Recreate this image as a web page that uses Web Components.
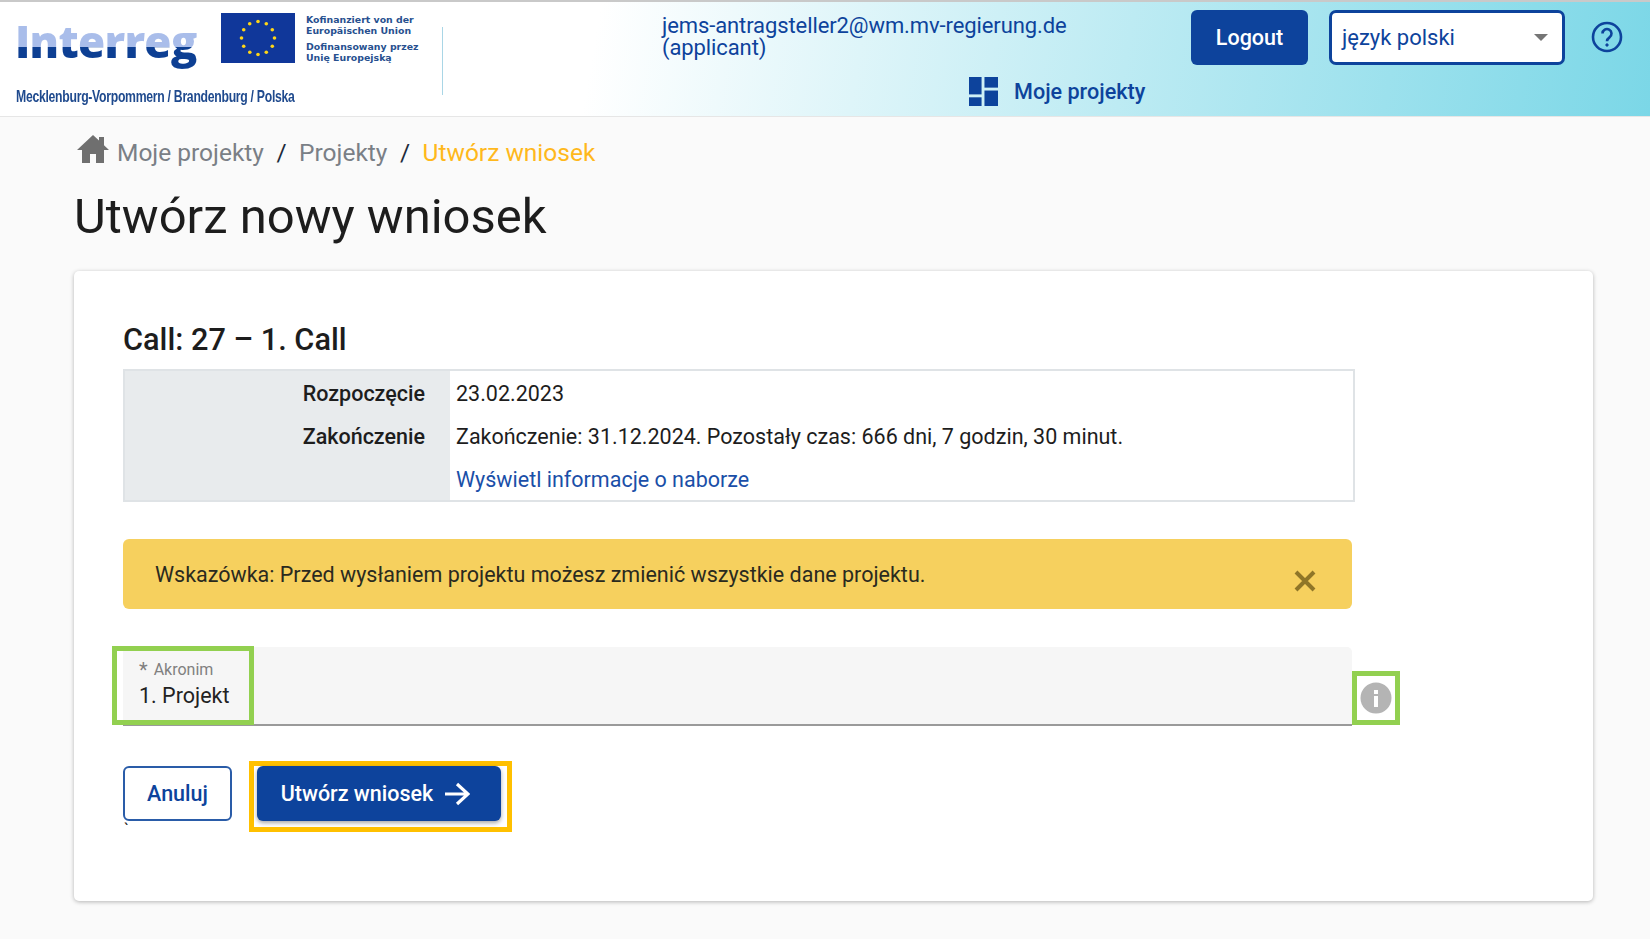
<!DOCTYPE html>
<html lang="pl">
<head>
<meta charset="utf-8">
<title>Utwórz nowy wniosek</title>
<style>
html, body { margin: 0; background: #fafafa; font-family: Roboto, "Liberation Sans", sans-serif; color: #1d1d1d; }
</style>
</head>
<body>
<app-header></app-header>
<page-main>
  <bread-crumbs slot="crumbs"></bread-crumbs>
  <h1 slot="title">Utwórz nowy wniosek</h1>
  <page-card>
    <call-info></call-info>
    <hint-alert>Wskazówka: Przed wysłaniem projektu możesz zmienić wszystkie dane projektu.</hint-alert>
    <text-field label="Akronim" value="1. Projekt"></text-field>
    <form-actions></form-actions>
  </page-card>
</page-main>

<script>
const BLUE = '#0d439c';

function stars() {
  let s = '';
  for (let i = 0; i < 12; i++) {
    const a = i * Math.PI / 6;
    const x = 37 + 16.5 * Math.sin(a);
    const y = 25 - 16.5 * Math.cos(a);
    s += `<circle cx="${x.toFixed(1)}" cy="${y.toFixed(1)}" r="1.8" fill="#ffd617"/>`;
  }
  return s;
}

class AppLogo extends HTMLElement {
  constructor() {
    super();
    this.attachShadow({ mode: 'open' });
    this.shadowRoot.innerHTML = `
<style>
:host { display: flex; flex-direction: column; width: 442px; box-sizing: border-box; padding: 10px 0 0 15px; }
.top { display: flex; height: 62px; }
.word {
  width: 206px;
  font: 800 44px/52px "Open Sans", sans-serif;
  letter-spacing: -0.7px;
  margin-top: 3px;
  height: 62px;
  background: linear-gradient(#a9bdea 0 52%, #0d3f93 52%);
  -webkit-background-clip: text;
  background-clip: text;
  color: transparent;
}
svg { width: 74px; height: 50px; display: block; margin-top: 1px; }
.fund { margin-left: 11px; color: #27508f; font: 700 9.4px/11px "DejaVu Sans", sans-serif; padding-top: 2px; }
.fund p { margin: 0 0 5px; }
.region { margin: 12px 0 0 1px; font: 700 17px/22px "Liberation Sans", sans-serif; letter-spacing: -0.4px; color: #1f4a8e; transform: scaleX(.72); transform-origin: left; white-space: nowrap; }
</style>
<div class="top">
  <div class="word">Interreg</div>
  <svg viewBox="0 0 74 50"><rect width="74" height="50" fill="#10379a"/>${stars()}</svg>
  <div class="fund">
    <p>Kofinanziert von der<br>Europäischen Union</p>
    <p>Dofinansowany przez<br>Unię Europejską</p>
  </div>
</div>
<div class="region">Mecklenburg-Vorpommern / Brandenburg / Polska</div>`;
  }
}
customElements.define('app-logo', AppLogo);

class LangSelect extends HTMLElement {
  constructor() {
    super();
    this.attachShadow({ mode: 'open' });
    this.shadowRoot.innerHTML = `
<style>
:host { display: flex; align-items: center; justify-content: space-between; box-sizing: border-box; width: 236px; height: 55px; background: #fff; border: 3px solid ${BLUE}; border-radius: 7px; padding: 0 14px 0 10px; font-size: 22px; color: ${BLUE}; }
i { width: 0; height: 0; border: 7px solid transparent; border-top: 7px solid #757575; border-bottom: 0; }
</style>
<span>język polski</span><i></i>`;
  }
}
customElements.define('lang-select', LangSelect);

class AppHeader extends HTMLElement {
  constructor() {
    super();
    this.attachShadow({ mode: 'open' });
    this.shadowRoot.innerHTML = `
<style>
:host { display: flex; box-sizing: border-box; height: 117px; border-top: 2px solid #c9c9c9; border-bottom: 1px solid #e6e6e6; background: linear-gradient(100deg, #fff 0 36%, #7bd7e7 100%); color: ${BLUE}; }
.sep { width: 1px; height: 68px; margin-top: 25px; background: #a9d6e6; }
.right { flex: 1; display: flex; flex-direction: column; }
.row { display: flex; box-sizing: border-box; height: 67px; align-items: center; padding: 3px 0 0 219px; }
.user { width: 529px; font-size: 22px; line-height: 22px; letter-spacing: -0.1px; }
.logout { box-sizing: border-box; width: 117px; height: 55px; display: flex; align-items: center; justify-content: center; background: ${BLUE}; color: #fff; border-radius: 6px; font-size: 21.5px; font-weight: 500; margin-right: 21px; }
.help { margin-left: 26px; width: 32px; height: 32px; }
.nav { display: flex; align-items: center; gap: 16px; padding-left: 526px; margin-top: 8px; font-size: 21.6px; font-weight: 500; }
.nav svg { width: 29px; height: 29px; }
</style>
<app-logo></app-logo>
<div class="sep"></div>
<div class="right">
  <div class="row">
    <div class="user">jems-antragsteller2@wm.mv-regierung.de<br>(applicant)</div>
    <div class="logout">Logout</div>
    <lang-select></lang-select>
    <svg class="help" viewBox="0 0 32 32" fill="none" stroke="${BLUE}" stroke-width="2.6"><circle cx="16" cy="16" r="14"/><path d="M11.5 12.5a4.5 4.5 0 1 1 7 3.8c-1.6 1.1-2.5 2-2.5 4"/><circle cx="16" cy="24" r="1.2" fill="${BLUE}" stroke-width="1"/></svg>
  </div>
  <div class="nav">
    <svg viewBox="0 0 30 30" fill="${BLUE}"><rect width="13" height="18"/><rect x="16" width="14" height="11"/><rect y="21" width="13" height="9"/><rect x="16" y="14" width="14" height="16"/></svg>
    <span>Moje projekty</span>
  </div>
</div>`;
  }
}
customElements.define('app-header', AppHeader);

class BreadCrumbs extends HTMLElement {
  constructor() {
    super();
    this.attachShadow({ mode: 'open' });
    this.shadowRoot.innerHTML = `
<style>
:host { display: flex; align-items: center; height: 36px; padding-left: 3px; font-size: 24.5px; color: #7a7f86; }
svg { width: 32px; height: 30px; margin-right: 8px; margin-top: -6px; }
b { font-weight: 400; color: #1d2a3a; margin: 0 12.5px; }
.now { color: #ffb81c; }
</style>
<svg viewBox="0 0 32 30" fill="#6f6f6f"><path d="M16 1 0 16h5v13h8v-9h6v9h8V16h5l-5-4.7V3h-5v3.6z"/></svg>
<span>Moje projekty</span><b>/</b><span>Projekty</span><b>/</b><span class="now">Utwórz wniosek</span>`;
  }
}
customElements.define('bread-crumbs', BreadCrumbs);

class PageMain extends HTMLElement {
  constructor() {
    super();
    this.attachShadow({ mode: 'open' });
    this.shadowRoot.innerHTML = `
<style>
:host { display: block; width: 1519px; margin-left: 74px; padding-top: 17px; height: 822px; box-sizing: border-box; }
::slotted(h1) { margin: 17px 0 24px; font-size: 49px; line-height: 60px; font-weight: 400; color: #1d1d1d; }
</style>
<slot name="crumbs"></slot>
<slot name="title"></slot>
<slot></slot>`;
  }
}
customElements.define('page-main', PageMain);

class PageCard extends HTMLElement {
  constructor() {
    super();
    this.attachShadow({ mode: 'open' });
    this.shadowRoot.innerHTML = `
<style>
:host { display: block; box-sizing: border-box; height: 630px; background: #fff; border-radius: 5px; box-shadow: 0 1px 4px rgba(0,0,0,.28); padding: 51px 49px 0; }
</style>
<slot></slot>`;
  }
}
customElements.define('page-card', PageCard);

class CallInfo extends HTMLElement {
  constructor() {
    super();
    this.attachShadow({ mode: 'open' });
    this.shadowRoot.innerHTML = `
<style>
:host { display: block; font-size: 21.5px; color: #1d1d1d; }
h2 { margin: 0 0 11px; font-size: 30.7px; line-height: 36px; font-weight: 500; }
.grid { display: grid; grid-template-columns: 325px 1fr; grid-auto-rows: 43px; width: 1232px; box-sizing: border-box; border: 2px solid #dfe3e6; }
.k, .v { display: flex; align-items: center; padding-bottom: 0; padding-top: 1px; }
.k { justify-content: flex-end; background: #e8ebed; padding-right: 25px; font-weight: 500; }
.v { padding-left: 6px; }
a { color: #1a4fa8; text-decoration: none; }
</style>
<h2>Call: 27 – 1. Call</h2>
<div class="grid">
  <div class="k">Rozpoczęcie</div><div class="v">23.02.2023</div>
  <div class="k">Zakończenie</div><div class="v">Zakończenie: 31.12.2024. Pozostały czas: 666 dni, 7 godzin, 30 minut.</div>
  <div class="k"></div><div class="v"><a href="#">Wyświetl informacje o naborze</a></div>
</div>`;
  }
}
customElements.define('call-info', CallInfo);

class HintAlert extends HTMLElement {
  constructor() {
    super();
    this.attachShadow({ mode: 'open' });
    this.shadowRoot.innerHTML = `
<style>
:host { display: flex; align-items: center; justify-content: space-between; box-sizing: border-box; width: 1229px; height: 70px; margin-top: 37px; padding: 0 36px 0 32px; background: #f6d05e; border-radius: 6px; font-size: 21.5px; color: #2a2a1e; }
svg { width: 22px; height: 22px; margin-top: 13px; }
</style>
<span><slot></slot></span>
<svg viewBox="0 0 22 22" stroke="#8f7628" stroke-width="4" fill="none"><path d="M2 2l18 18M20 2 2 20"/></svg>`;
  }
}
customElements.define('hint-alert', HintAlert);

class TextField extends HTMLElement {
  constructor() {
    super();
    this.attachShadow({ mode: 'open' });
    this.shadowRoot.innerHTML = `
<style>
:host { display: flex; align-items: flex-end; margin-top: 38px; position: relative; }
.box { box-sizing: border-box; width: 1229px; height: 79px; background: #f6f6f6; border-bottom: 2px solid #9a9a9a; border-radius: 5px 5px 0 0; padding: 13px 0 0 16px; }
.label { font-size: 16px; line-height: 20px; color: #808080; }
.label b { font-weight: 400; font-size: 20px; line-height: 16px; margin-right: 6px; vertical-align: -2px; }
.value { font-size: 21.5px; line-height: 30px; color: #222; padding-top: 1px; }
.mark { position: absolute; left: -11px; top: -1px; box-sizing: border-box; width: 142px; height: 79px; border: 5px solid #92d050; }
.info { box-sizing: border-box; width: 48px; height: 54px; margin-bottom: 1px; border: 5px solid #92d050; display: flex; align-items: center; justify-content: center; }
.info svg { width: 32px; height: 32px; }
</style>
<div class="box">
  <div class="label"><b>*</b><span class="name"></span></div>
  <div class="value"></div>
</div>
<div class="mark"></div>
<div class="info"><svg viewBox="0 0 32 32"><circle cx="16" cy="16" r="15.5" fill="#b4b4b4"/><rect x="14" y="14" width="4" height="11" fill="#fff"/><rect x="14" y="8" width="4" height="4" fill="#fff"/></svg></div>`;
  }
  connectedCallback() {
    this.shadowRoot.querySelector('.name').textContent = this.getAttribute('label');
    this.shadowRoot.querySelector('.value').textContent = this.getAttribute('value');
  }
}
customElements.define('text-field', TextField);

class FormActions extends HTMLElement {
  constructor() {
    super();
    this.attachShadow({ mode: 'open' });
    this.shadowRoot.innerHTML = `
<style>
:host { display: flex; align-items: flex-start; margin-top: 40px; position: relative; font-size: 21.5px; font-weight: 500; }
.btn { box-sizing: border-box; display: flex; align-items: center; justify-content: center; border-radius: 6px; height: 55px; }
.cancel { width: 109px; background: #fff; border: 2px solid #2a5ca8; color: ${BLUE}; }
.hl { box-sizing: border-box; width: 263px; height: 71px; margin: -5px 0 0 17px; border: 5px solid #ffc000; padding: 0 0 0 3px; }
.go { width: 244px; background: ${BLUE}; color: #fff; box-shadow: 0 2px 4px rgba(0,0,0,.35); gap: 11px; padding-right: 7px; }
.go svg { width: 26px; height: 24px; }
.tick { position: absolute; left: 1px; top: 54px; font-size: 16px; font-weight: 400; line-height: 20px; color: #222; }
</style>
<div class="btn cancel">Anuluj</div>
<div class="hl"><div class="btn go">Utwórz wniosek
  <svg viewBox="0 0 26 24" fill="none" stroke="#fff" stroke-width="3.2"><path d="M1 12h23M13 2l11 10-11 10"/></svg>
</div></div>
<span class="tick">\`</span>`;
  }
}
customElements.define('form-actions', FormActions);
</script>
</body>
</html>
